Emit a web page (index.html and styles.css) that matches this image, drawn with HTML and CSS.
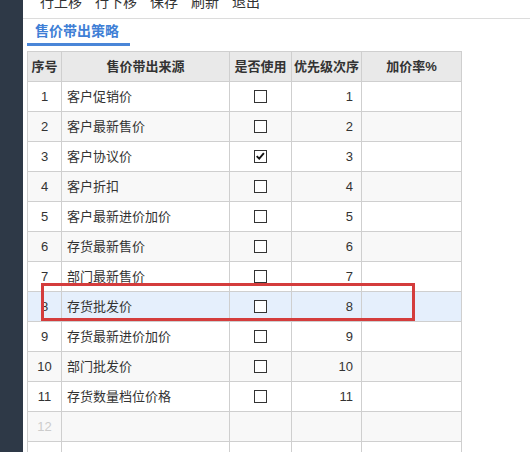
FILE: index.html
```html
<!DOCTYPE html>
<html lang="zh-CN">
<head>
<meta charset="utf-8">
<title>售价带出策略</title>
<link rel="stylesheet" href="styles.css">
</head>
<body>
<div class="app">
  <aside class="sidebar"></aside>
  <main class="main">
    <div class="toolbar">
      <div class="tools">
        <span>行上移</span><span>行下移</span><span>保存</span><span>刷新</span><span>退出</span>
      </div>
    </div>
    <div class="tabs">
      <div class="tab active">售价带出策略</div>
    </div>
    <table class="grid">
      <colgroup>
        <col class="c1"><col class="c2"><col class="c3"><col class="c4"><col class="c5">
      </colgroup>
      <thead>
        <tr><th>序号</th><th>售价带出来源</th><th>是否使用</th><th>优先级次序</th><th>加价率%</th></tr>
      </thead>
      <tbody>
        <tr><td class="no">1</td><td class="src">客户促销价</td><td class="chk"><span class="cb"></span></td><td class="pri">1</td><td></td></tr>
        <tr class="alt"><td class="no">2</td><td class="src">客户最新售价</td><td class="chk"><span class="cb"></span></td><td class="pri">2</td><td></td></tr>
        <tr><td class="no">3</td><td class="src">客户协议价</td><td class="chk"><span class="cb on"><svg viewBox="0 0 13 13" width="11" height="11"><polyline points="2,6 5,9 10.5,2.5" fill="none" stroke="#111" stroke-width="2.2"/></svg></span></td><td class="pri">3</td><td></td></tr>
        <tr class="alt"><td class="no">4</td><td class="src">客户折扣</td><td class="chk"><span class="cb"></span></td><td class="pri">4</td><td></td></tr>
        <tr><td class="no">5</td><td class="src">客户最新进价加价</td><td class="chk"><span class="cb"></span></td><td class="pri">5</td><td></td></tr>
        <tr class="alt"><td class="no">6</td><td class="src">存货最新售价</td><td class="chk"><span class="cb"></span></td><td class="pri">6</td><td></td></tr>
        <tr><td class="no">7</td><td class="src">部门最新售价</td><td class="chk"><span class="cb"></span></td><td class="pri">7</td><td></td></tr>
        <tr class="sel"><td class="no">8</td><td class="src">存货批发价</td><td class="chk"><span class="cb"></span></td><td class="pri">8</td><td></td></tr>
        <tr><td class="no">9</td><td class="src">存货最新进价加价</td><td class="chk"><span class="cb"></span></td><td class="pri">9</td><td></td></tr>
        <tr class="alt"><td class="no">10</td><td class="src">部门批发价</td><td class="chk"><span class="cb"></span></td><td class="pri">10</td><td></td></tr>
        <tr><td class="no">11</td><td class="src">存货数量档位价格</td><td class="chk"><span class="cb"></span></td><td class="pri">11</td><td></td></tr>
        <tr class="alt empty"><td class="no">12</td><td></td><td></td><td></td><td></td></tr>
        <tr class="empty"><td class="no">13</td><td></td><td></td><td></td><td></td></tr>
      </tbody>
    </table>
  </main>
</div>
<div class="mark"></div>
</body>
</html>
```
FILE: styles.css
```css
html, body {
  margin: 0;
  padding: 0;
}
body {
  width: 530px;
  height: 452px;
  overflow: hidden;
  background: #fff;
  font-family: "Liberation Sans", "Noto Sans CJK SC", sans-serif;
  color: #333;
  position: relative;
}
.app {
  display: flex;
  height: 452px;
}
.sidebar {
  width: 23px;
  flex: none;
  background: #2e3947;
}
.main {
  flex: 1;
  min-width: 0;
}
.toolbar {
  height: 18px;
  border-bottom: 1px solid #dcdcdc;
  overflow: hidden;
}
.tools {
  display: flex;
  gap: 13px;
  padding-left: 17px;
  margin-top: -5px;
  font-size: 14px;
  line-height: 14px;
  color: #333;
}
.tabs {
  display: flex;
  padding-left: 4px;
  margin-top: 1px;
}
.tab {
  padding: 1px 11px 2px 8px;
  font-size: 14px;
  line-height: 20px;
  font-weight: bold;
  color: #3f7fd6;
  border-bottom: 3px solid #4a86d8;
}
.grid {
  margin: 5px 0 0 4px;
  border-collapse: separate;
  border-spacing: 0;
  table-layout: fixed;
  width: 435px;
  border-left: 1px solid #cfcfcf;
  border-top: 1px solid #cfcfcf;
  font-size: 13px;
}
.grid col.c1 { width: 34px; }
.grid col.c2 { width: 168px; }
.grid col.c3 { width: 62px; }
.grid col.c4 { width: 70px; }
.grid col.c5 { width: 100px; }
.grid th, .grid td {
  box-sizing: border-box;
  padding: 0;
  height: 30px;
  line-height: 29px;
  border-right: 1px solid #cfcfcf;
  border-bottom: 1px solid #cfcfcf;
  white-space: nowrap;
  overflow: hidden;
}
.grid th {
  background: #e9e9e9;
  font-weight: bold;
  color: #333;
  text-align: center;
}
.grid td.no {
  text-align: center;
}
.grid td.src {
  padding-left: 5px;
  text-align: left;
}
.grid td.chk {
  text-align: center;
}
.grid td.pri {
  text-align: right;
  padding-right: 8px;
}
.grid tr.alt td {
  background: #f8f8f8;
}
.grid tr.sel td {
  background: #e5effc;
}
.grid tr.empty td.no {
  color: #cccccc;
}
.cb {
  display: inline-flex;
  align-items: center;
  justify-content: center;
  box-sizing: border-box;
  width: 13px;
  height: 13px;
  border: 1px solid #333;
  background: #fff;
  vertical-align: middle;
  margin-top: -2px;
}
.mark {
  position: absolute;
  left: 41px;
  top: 283px;
  width: 374px;
  height: 38px;
  box-sizing: border-box;
  border: 3px solid #d43c3c;
}
```
